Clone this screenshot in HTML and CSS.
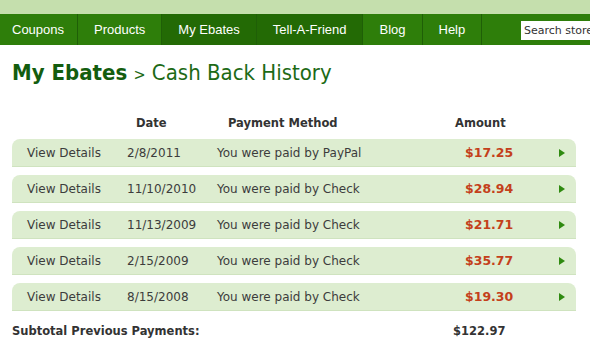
FILE: index.html
```html
<!DOCTYPE html>
<html lang="en">
  <head>
    <meta charset="UTF-8" />
    <title>My Ebates - Cash Back History</title>
    <link rel="stylesheet" href="styles.css">
  </head>
  <body>
    <div class="top-band"></div>
    <div class="nav">
      <a class="nav-item">Coupons</a>
      <a class="nav-item">Products</a>
      <a class="nav-item active">My Ebates</a>
      <a class="nav-item active">Tell-A-Friend</a>
      <a class="nav-item">Blog</a>
      <a class="nav-item">Help</a>
      <div class="search">Search stores</div>
    </div>

    <div class="content">
      <h1 class="title"><b>My Ebates</b> <span class="sep">&gt;</span> Cash Back History</h1>

      <div class="head-row">
        <div></div>
        <div>Date</div>
        <div>Payment Method</div>
        <div>Amount</div>
      </div>

      <div class="pay-row">
        <div>View Details</div>
        <div>2/8/2011</div>
        <div>You were paid by PayPal</div>
        <div class="amount">$17.25</div>
        <div class="arrow"></div>
      </div>
      <div class="pay-row">
        <div>View Details</div>
        <div>11/10/2010</div>
        <div>You were paid by Check</div>
        <div class="amount">$28.94</div>
        <div class="arrow"></div>
      </div>
      <div class="pay-row">
        <div>View Details</div>
        <div>11/13/2009</div>
        <div>You were paid by Check</div>
        <div class="amount">$21.71</div>
        <div class="arrow"></div>
      </div>
      <div class="pay-row">
        <div>View Details</div>
        <div>2/15/2009</div>
        <div>You were paid by Check</div>
        <div class="amount">$35.77</div>
        <div class="arrow"></div>
      </div>
      <div class="pay-row">
        <div>View Details</div>
        <div>8/15/2008</div>
        <div>You were paid by Check</div>
        <div class="amount">$19.30</div>
        <div class="arrow"></div>
      </div>

      <div class="subtotal">
        <div>Subtotal Previous Payments:</div>
        <div>$122.97</div>
      </div>
    </div>
  </body>
</html>
```

FILE: styles.css
```css
body {
  margin: 0;
  background: #ffffff;
  font-family: "DejaVu Sans", Verdana, sans-serif;
  font-size: 12px;
  color: #3c3c3c;
  overflow: hidden;
}
.top-band {
  height: 14px;
  background: #c5dfad;
}
.nav {
  display: flex;
  align-items: center;
  height: 31px;
  background: #2e7e0a;
}
.nav-item {
  height: 31px;
  line-height: 31px;
  padding: 0 16px;
  border-right: 1px solid #1f5f07;
  font-family: "Liberation Sans", Arial, sans-serif;
  font-size: 13px;
  color: #ffffff;
}
.nav-item:first-child {
  padding-left: 12px;
  padding-right: 13px;
}
.nav-item.active {
  background: #236a05;
}
.search {
  margin-left: auto;
  width: 66px;
  height: 19px;
  line-height: 19px;
  padding-left: 3px;
  margin-top: 2px;
  background: #ffffff;
  color: #333333;
  font-size: 11px;
  white-space: nowrap;
  overflow: hidden;
}
.content {
  padding: 0 14px 0 12px;
}
.title {
  margin: 14px 0 0;
  height: 28px;
  line-height: 28px;
  font-family: "DejaVu Sans Condensed", "DejaVu Sans", sans-serif;
  font-stretch: condensed;
  font-size: 22px;
  font-weight: normal;
  color: #1d6a16;
}
.title b {
  color: #135d0f;
}
.title .sep {
  font-size: 16px;
}
.head-row {
  display: grid;
  grid-template-columns: 124px 92px 227px 1fr;
  margin-top: 28px;
  height: 16px;
  line-height: 16px;
  font-size: 11.5px;
  font-weight: bold;
  color: #333333;
}
.pay-row {
  display: grid;
  grid-template-columns: 100px 90px 248px 94px 1fr;
  align-items: center;
  height: 27px;
  margin-top: 8px;
  padding-left: 15px;
  background: #ddedd0;
  border-bottom: 1px solid #cfe3bf;
  border-radius: 8px 8px 0 0;
}
.amount {
  font-size: 12.5px;
  font-weight: bold;
  color: #c4401a;
}
.arrow {
  width: 0;
  height: 0;
  border-top: 4px solid transparent;
  border-bottom: 4px solid transparent;
  border-left: 6px solid #2f8a10;
}
.subtotal {
  display: grid;
  grid-template-columns: 441px 1fr;
  margin-top: 12px;
  height: 16px;
  line-height: 16px;
  font-size: 11.5px;
  font-weight: bold;
  color: #333333;
}
```
